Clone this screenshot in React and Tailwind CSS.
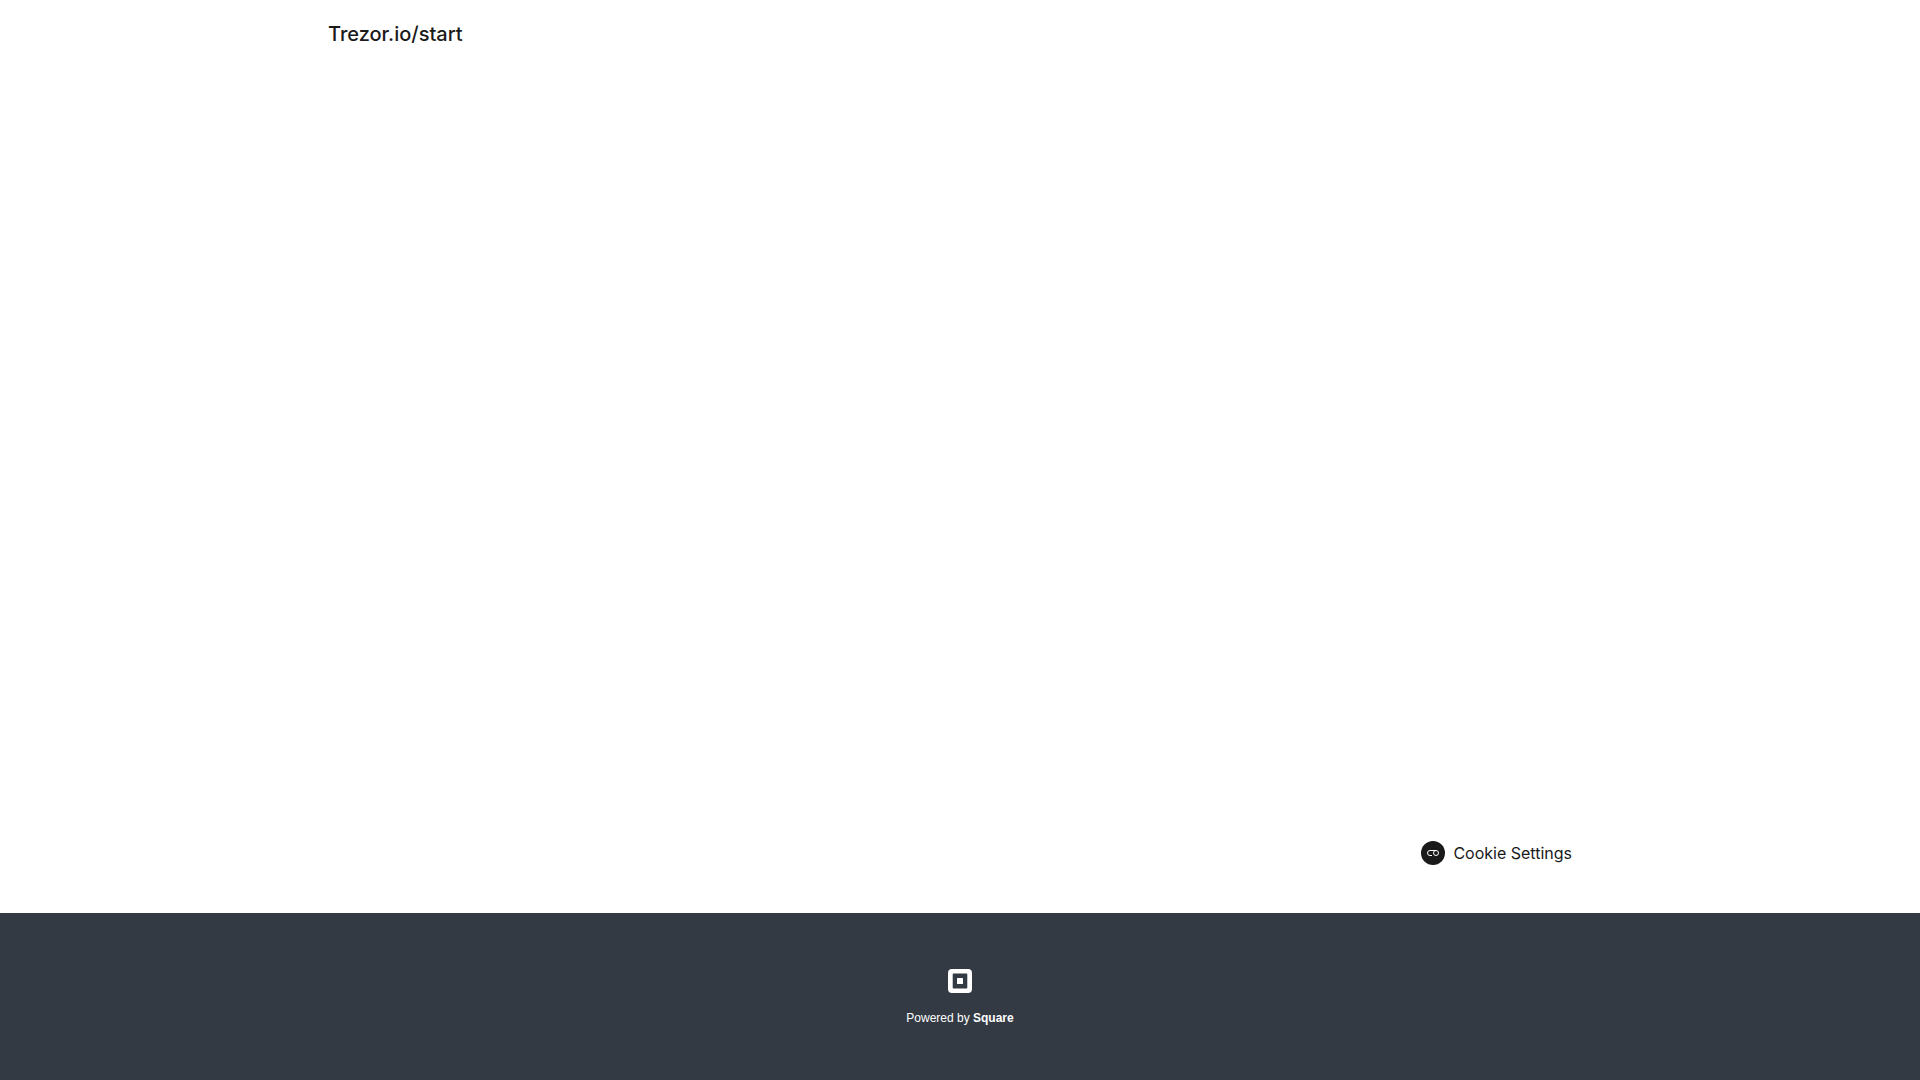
function Header() {
  return (
    <header className="px-8 py-4">
      <div className="max-w-[1264px] mx-auto">
        <a href="#" className="text-xl leading-9 font-medium text-[#1a1a1a]">Trezor.io/start</a>
      </div>
    </header>
  );
}

function CookieIcon() {
  return (
    <svg width="24" height="24" viewBox="0 0 24 24" fill="none">
      <circle cx="12" cy="12" r="12" fill="#1a1a1a" />
      <path d="M11 14.5H9a2.5 2.5 0 0 1 0-5h6" stroke="#fff" />
      <circle cx="15" cy="12" r="2.5" stroke="#fff" />
    </svg>
  );
}

function SquareLogo() {
  return (
    <svg width="24" height="24" viewBox="0 0 24 24" fill="#fff">
      <path
        fillRule="evenodd"
        d="M4 0h16a4 4 0 0 1 4 4v16a4 4 0 0 1-4 4H4a4 4 0 0 1-4-4V4a4 4 0 0 1 4-4zm1.5 4.5a.8.8 0 0 0-.8.8v13.4c0 .4.4.8.8.8h13a.8.8 0 0 0 .8-.8V5.3a.8.8 0 0 0-.8-.8z"
      />
      <rect x="9" y="9" width="6" height="6" rx="0.5" />
    </svg>
  );
}

export default function App() {
  return (
    <div className="min-h-screen flex flex-col bg-white font-['Inter',sans-serif]">
      <Header />
      <main className="flex-1" />

      <div className="px-8 pb-12">
        <div className="max-w-[1264px] mx-auto flex justify-end pr-5">
          <button type="button" className="flex items-center gap-2 text-base text-[#1a1a1a]">
            <CookieIcon />
            Cookie Settings
          </button>
        </div>
      </div>

      <footer className="bg-[#333a44] text-white">
        <a href="#" className="flex flex-col items-center gap-4 pt-14 pb-[53px] font-['Liberation_Sans',sans-serif] text-xs leading-[18px]">
          <SquareLogo />
          <span>
            Powered by <strong className="font-bold">Square</strong>
          </span>
        </a>
      </footer>
    </div>
  );
}
